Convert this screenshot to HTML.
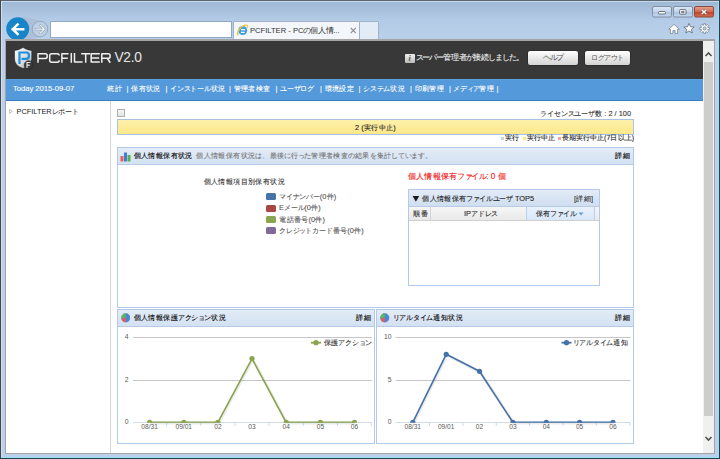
<!DOCTYPE html>
<html><head><meta charset="utf-8">
<style>
html,body{margin:0;padding:0;width:720px;height:459px;overflow:hidden;background:#b9d0ea;}
body{position:relative;font-family:"Liberation Sans",sans-serif;}
.a{position:absolute;}
.t{position:absolute;white-space:nowrap;line-height:1;-webkit-text-stroke-width:0.1px;}
#frame{left:0;top:0;width:720px;height:459px;background:linear-gradient(#9db6d3 0px,#b3cbe6 20px,#b9d1ea 40px,#b9d1ea 459px);}
#content{left:6px;top:41px;width:697px;height:412px;background:#fff;}
#hdr{left:6px;top:41px;width:697px;height:38px;background:#383838;}
#nav{left:6px;top:79px;width:697px;height:22px;background:#5499da;}
.t i{display:inline-block;width:1em;font-style:normal;text-align:center;}.t u{display:inline-block;width:0.92em;text-decoration:none;text-align:center;}.t b{display:inline-block;width:0.8em;font-weight:inherit;text-align:center;}
</style></head>
<body>
<div id="frame" class="a"></div>
<!-- window outer borders -->
<div class="a" style="left:0;top:0;width:720px;height:1px;background:#5c6670"></div>
<div class="a" style="left:0;top:0;width:1px;height:459px;background:#474747"></div>
<div class="a" style="left:1px;top:1px;width:718px;height:1px;background:#c9d9ec"></div>
<div class="a" style="left:1px;top:1px;width:1px;height:456px;background:#cfe0f2"></div>
<div class="a" style="left:718px;top:1px;width:1px;height:457px;background:#9fdcf6"></div>
<div class="a" style="left:719px;top:0;width:1px;height:459px;background:#1c4550"></div>
<div class="a" style="left:1px;top:457px;width:718px;height:1px;background:#9fdcf6"></div>
<div class="a" style="left:0;top:458px;width:720px;height:1px;background:#1c4550"></div>


<!-- chrome -->
<svg class="a" style="left:0;top:0" width="720" height="41" viewBox="0 0 720 41">
  <path d="M18 17.3 Q30 17.3 40 21 L40 37 Q28 40 18 40 Z" fill="#a9bbd1" opacity="0.75"/>
  <circle cx="40" cy="29" r="7.8" fill="#bccfe6" stroke="#8e9fb3" stroke-width="0.8"/>
  <path d="M35.8 29.2 H44.2 M40.6 25.4 L44.3 29.2 L40.6 33" fill="none" stroke="#8d9aab" stroke-width="2.2" stroke-linecap="round" stroke-linejoin="round"/><path d="M35.8 29.2 H44.2 M40.6 25.4 L44.3 29.2 L40.6 33" fill="none" stroke="#eef3f8" stroke-width="1.2" stroke-linecap="round" stroke-linejoin="round"/>
  <circle cx="17.7" cy="28.8" r="11.5" fill="#1785c8"/>
  <path d="M12.8 29.2 H23.2 M17.6 24.4 L12.8 29.2 L17.6 34" fill="none" stroke="#fff" stroke-width="2.5" stroke-linecap="square"/>
  <rect x="50.5" y="21.5" width="181" height="16" fill="#fff" stroke="#93a8c0" stroke-width="1"/>
  <path d="M233.5 39 V21.5 H359.5 V39" fill="#f3f6fa" stroke="#9fb2c8" stroke-width="1"/>
  <circle cx="242.7" cy="30.5" r="4.5" fill="#3c9ede"/>
  <path d="M241 29.6 H245.2 M240.9 32.4 H244.6" fill="none" stroke="#fff" stroke-width="1.1"/>
  <path d="M238.2 35.2 Q236.2 33.3 239.6 29 Q243.5 24.6 246.6 25.2 Q248 25.9 247.3 27.6" fill="none" stroke="#f3c52c" stroke-width="1.3"/>
  <path d="M350.8 28 L355.8 33 M355.8 28 L350.8 33" stroke="#8f949a" stroke-width="1.1"/>
  <path d="M359.5 39 V21.5 H378.5 V39" fill="#e2ecf7" stroke="#9fb2c8" stroke-width="1"/>
  <!-- window buttons -->
  <defs>
    <linearGradient id="wb" x1="0" y1="0" x2="0" y2="1"><stop offset="0" stop-color="#dde8f4"/><stop offset="0.5" stop-color="#c3d5ea"/><stop offset="0.55" stop-color="#aec5e0"/><stop offset="1" stop-color="#c6d9ee"/></linearGradient>
    <linearGradient id="wc" x1="0" y1="0" x2="0" y2="1"><stop offset="0" stop-color="#e8a493"/><stop offset="0.5" stop-color="#d2674f"/><stop offset="0.55" stop-color="#c2462c"/><stop offset="1" stop-color="#d56c4f"/></linearGradient>
  </defs>
  <rect x="652.5" y="6.5" width="19" height="10.5" rx="1.5" fill="url(#wb)" stroke="#7e8ea3" stroke-width="1"/>
  <rect x="673.5" y="6.5" width="19" height="10.5" rx="1.5" fill="url(#wb)" stroke="#7e8ea3" stroke-width="1"/>
  <rect x="694.5" y="6.5" width="19" height="10.5" rx="1.5" fill="url(#wc)" stroke="#8a4a3c" stroke-width="1"/>
  <rect x="658.5" y="11.5" width="7" height="2.5" rx="1" fill="#fff" stroke="#4a5563" stroke-width="0.8"/>
  <rect x="679.6" y="9.6" width="6.4" height="4.6" rx="0.8" fill="#f4f6f8" stroke="#4a5563" stroke-width="0.8"/>
  <rect x="681.2" y="11.2" width="3.2" height="1.6" fill="#5a6878"/>
  <path d="M701.6 9.6 L706.4 14.2 M706.4 9.6 L701.6 14.2" stroke="#5a2a20" stroke-width="2.6"/>
  <path d="M701.6 9.6 L706.4 14.2 M706.4 9.6 L701.6 14.2" stroke="#fff" stroke-width="1.5"/>
  <!-- home star gear -->
  <path d="M668.8 29.3 L674 24.3 L679.2 29.3 H677.6 V33.4 H675.1 V30.6 H672.9 V33.4 H670.4 V29.3 Z" fill="#fff" stroke="#6a7888" stroke-width="0.7" stroke-linejoin="round"/>
  <path d="M689 23.3 L690.5 26.8 L694.2 27 L691.3 29.4 L692.3 33 L689 31 L685.7 33 L686.7 29.4 L683.8 27 L687.5 26.8 Z" fill="#fff" stroke="#5d6b7a" stroke-width="0.8"/>
  <path d="M707.85 27.50 L709.43 27.67 L709.43 29.33 L707.85 29.50 L707.61 30.09 L708.60 31.33 L707.43 32.50 L706.19 31.51 L705.60 31.75 L705.43 33.33 L703.77 33.33 L703.60 31.75 L703.01 31.51 L701.77 32.50 L700.60 31.33 L701.59 30.09 L701.35 29.50 L699.77 29.33 L699.77 27.67 L701.35 27.50 L701.59 26.91 L700.60 25.67 L701.77 24.50 L703.01 25.49 L703.60 25.25 L703.77 23.67 L705.43 23.67 L705.60 25.25 L706.19 25.49 L707.43 24.50 L708.60 25.67 L707.61 26.91 Z" fill="#fff" stroke="#6a7888" stroke-width="0.7" stroke-linejoin="round"/>
  <circle cx="704.6" cy="28.5" r="1.6" fill="#b8cfe8" stroke="#6a7888" stroke-width="0.7"/>
</svg>
<div class="t" style="left:250px;top:26.5px;font-size:7.6px;color:#333;-webkit-text-stroke-width:0">PCFILTER - PC<u>の</u><i>個</i><i>人</i><i>情</i>...</div>

<!-- content border -->
<div class="a" style="left:5px;top:39px;width:710px;height:415px;background:#a4a4a4"></div>
<div id="content" class="a"></div>
<div id="hdr" class="a"></div>
<div id="nav" class="a"></div>


<!-- header -->
<svg class="a" style="left:12px;top:46px" width="24" height="26" viewBox="0 0 24 26">
  <defs><linearGradient id="sh" x1="0" y1="0" x2="1" y2="1"><stop offset="0" stop-color="#ffffff"/><stop offset="0.6" stop-color="#d9d9d9"/><stop offset="1" stop-color="#9a9a9a"/></linearGradient></defs>
  <path d="M11 1.5 Q15 4 19.8 4.5 V13 Q19.8 19.5 11 22.5 Q2.5 19.5 2.5 13 V4.5 Q7 4 11 1.5 Z" fill="url(#sh)" stroke="#222" stroke-width="0.6"/>
  <path d="M7.5 18 V6.5 H14 Q17 6.5 17 9.7 Q17 12.8 14 12.8 H9.5" fill="none" stroke="#1c8fe3" stroke-width="2.2"/>
  <circle cx="16.5" cy="19" r="4.3" fill="#3a3a3a" stroke="#222" stroke-width="0.5"/>
  <path d="M15 22 V16.5 H18.5 M15 19.2 H17.8" fill="none" stroke="#e8e8e8" stroke-width="1.2"/>
</svg>
<svg class="a" style="left:30px;top:48px" width="120" height="20" viewBox="30 48 120 20">
  <g fill="none" stroke="#f0f0f0" stroke-width="1.5" stroke-linejoin="round">
    <path d="M38 62.8 V53.7 H45.3 Q47.2 53.7 47.2 55.6 V56.6 Q47.2 58.5 45.3 58.5 H38"/>
    <path d="M59.2 55.6 Q59.2 53.7 57.3 53.7 H51.8 Q49.7 53.7 49.7 55.8 V60.2 Q49.7 62.2 51.8 62.2 H57.3 Q59.2 62.2 59.2 60.3"/>
    <path d="M61.9 62.8 V53.7 H68.6 M61.9 58.2 H67.8"/>
    <path d="M71.3 53 V62.8"/>
    <path d="M74.5 53 V62.1 H82.6"/>
    <path d="M81.2 53.7 H90.2 M85.7 53.7 V62.8"/>
    <path d="M99.8 53.7 H91.2 V62.1 H99.8 M91.2 58.1 H99.2"/>
    <path d="M101.8 62.8 V53.7 H108.2 Q110.1 53.7 110.1 55.6 V56.4 Q110.1 58.3 108.2 58.3 H101.8 M107.2 58.3 L110.3 62.8"/>
  </g>
</svg>
<div class="t" style="left:114.4px;top:51.2px;font-size:13.8px;color:#e6e6e6;letter-spacing:-0.3px;-webkit-text-stroke-width:0">V2.0</div>
<div class="a" style="left:405px;top:54px;width:10px;height:9px;background:linear-gradient(#f0f0f0,#bcbcbc);border-radius:1px"></div>
<div class="t" style="left:408.5px;top:55px;font-size:8px;font-style:italic;font-weight:bold;color:#555;font-family:'Liberation Serif',serif">i</div>
<div class="t" style="left:415.5px;top:54px;font-size:7.6px;color:#f0f0f0"><u>ス</u><u>ー</u><u>パ</u><u>ー</u><i>管</i><i>理</i><i>者</i><u>が</u><i>接</i><i>続</i><u>し</u><u>ま</u><u>し</u><u>た</u><i>。</i></div>
<div class="a" style="left:528px;top:51px;width:50px;height:14px;border-radius:2px;background:linear-gradient(#ffffff,#e9e9e9 50%,#d4d4d4);box-shadow:0 0 0 0.5px #222"></div>
<div class="t" style="left:528px;top:54px;width:50px;text-align:center;font-size:7.5px;color:#505050;-webkit-text-stroke-width:0"><u>ヘ</u><u>ル</u><u>プ</u></div>
<div class="a" style="left:585px;top:51px;width:45px;height:14px;border-radius:2px;background:linear-gradient(#ffffff,#e9e9e9 50%,#d4d4d4);box-shadow:0 0 0 0.5px #222"></div>
<div class="t" style="left:585px;top:54px;width:45px;text-align:center;font-size:7px;color:#505050;-webkit-text-stroke-width:0"><u>ロ</u><u>グ</u><u>ア</u><u>ウ</u><u>ト</u></div>

<!-- nav -->
<div class="a" style="left:6px;top:100px;width:697px;height:1px;background:#3c7cc0"></div>
<div class="a" style="left:6px;top:79px;width:697px;height:1px;background:#5a9fe0"></div>
<div class="t" style="left:13px;top:85px;font-size:7.6px;color:#fff">Today 2015-09-07</div>
<div class="t" style="left:107px;top:85px;font-size:7.4px;color:#fff"><i>統</i><i>計</i></div>
<div class="t" style="left:126.5px;top:85px;font-size:7.4px;color:#fff">|</div>
<div class="t" style="left:131px;top:85px;font-size:7.4px;color:#fff"><i>保</i><i>有</i><i>状</i><i>況</i></div>
<div class="t" style="left:165.5px;top:85px;font-size:7.4px;color:#fff">|</div>
<div class="t" style="left:170px;top:85px;font-size:7.4px;color:#fff"><u>イ</u><u>ン</u><u>ス</u><u>ト</u><u>ー</u><u>ル</u><i>状</i><i>況</i></div>
<div class="t" style="left:229px;top:85px;font-size:7.4px;color:#fff">|</div>
<div class="t" style="left:233.5px;top:85px;font-size:7.4px;color:#fff"><i>管</i><i>理</i><i>者</i><i>検</i><i>査</i></div>
<div class="t" style="left:275.5px;top:85px;font-size:7.4px;color:#fff">|</div>
<div class="t" style="left:280px;top:85px;font-size:7.4px;color:#fff"><u>ユ</u><u>ー</u><u>ザ</u><u>ロ</u><u>グ</u></div>
<div class="t" style="left:320px;top:85px;font-size:7.4px;color:#fff">|</div>
<div class="t" style="left:324.5px;top:85px;font-size:7.4px;color:#fff"><i>環</i><i>境</i><i>設</i><i>定</i></div>
<div class="t" style="left:358.5px;top:85px;font-size:7.4px;color:#fff">|</div>
<div class="t" style="left:363px;top:85px;font-size:7.4px;color:#fff"><u>シ</u><u>ス</u><u>テ</u><u>ム</u><i>状</i><i>況</i></div>
<div class="t" style="left:410px;top:85px;font-size:7.4px;color:#fff">|</div>
<div class="t" style="left:414.5px;top:85px;font-size:7.4px;color:#fff"><i>印</i><i>刷</i><i>管</i><i>理</i></div>
<div class="t" style="left:449px;top:85px;font-size:7.4px;color:#fff">|</div>
<div class="t" style="left:453px;top:85px;font-size:7.4px;color:#fff"><u>メ</u><u>デ</u><b>ィ</b><u>ア</u><i>管</i><i>理</i></div>
<div class="t" style="left:496.5px;top:85px;font-size:7.4px;color:#fff">|</div>

<!-- sidebar -->
<div class="a" style="left:110px;top:101px;width:1px;height:352px;background:#d4d4d4"></div>
<svg class="a" style="left:8px;top:108px" width="6" height="7"><path d="M1.6 1.4 L4.4 3.4 L1.6 5.4 Z" fill="none" stroke="#b0b0b0" stroke-width="0.8"/></svg>
<div class="t" style="left:16.5px;top:107.5px;font-size:7.4px;color:#222;-webkit-text-stroke-width:0">PCFILTER<u>レ</u><u>ポ</u><u>ー</u><u>ト</u></div>


<!-- main top -->
<div class="a" style="left:117px;top:109px;width:6px;height:6px;border:1px solid #b0b0b0;background:linear-gradient(#f4f4f4,#e4e4e4)"></div>
<div class="t" style="right:89px;top:109.5px;font-size:7.4px;color:#333"><u>ラ</u><u>イ</u><u>セ</u><u>ン</u><u>ス</u><u>ユ</u><u>ー</u><u>ザ</u><i>数</i> : 2 / 100</div>
<div class="a" style="left:117px;top:119px;width:515px;height:14px;border:1px solid #a9c1e2;background:linear-gradient(#fef1ab,#fdec9a 50%,#fce88b)"></div>
<div class="t" style="left:355px;top:123.5px;font-size:7.4px;color:#222">2 (<i>実</i><i>行</i><i>中</i><i>止</i>)</div>
<div class="a" style="left:501px;top:137px;width:3px;height:3px;background:#c2d6ee"></div>
<div class="t" style="left:504.5px;top:134.5px;font-size:7.1px;color:#222"><i>実</i><i>行</i></div>
<div class="a" style="left:523px;top:137px;width:3px;height:3px;background:#fbe98a"></div>
<div class="t" style="left:526.5px;top:134.5px;font-size:7.1px;color:#222"><i>実</i><i>行</i><i>中</i><i>止</i></div>
<div class="a" style="left:558px;top:137px;width:3px;height:3px;background:#f5a3a3"></div>
<div class="t" style="left:561.5px;top:134.5px;font-size:7.1px;color:#222"><i>長</i><i>期</i><i>実</i><i>行</i><i>中</i><i>止</i>(7<i>日</i><i>以</i><i>上</i>)</div>

<!-- panel 1 -->
<div class="a" style="left:117px;top:147px;width:515px;height:159px;border:1px solid #b2caea;background:#fff"></div>
<div class="a" style="left:118px;top:148px;width:515px;height:16px;background:linear-gradient(#e3ecf7,#d3e1f2);border-bottom:1px solid #b5cbe8;box-sizing:border-box;width:515px;height:17px"></div>
<svg class="a" style="left:120px;top:152px" width="11" height="10" viewBox="0 0 11 10">
  <rect x="0.5" y="4" width="3" height="5.5" fill="#e8605a"/>
  <rect x="4" y="0.5" width="3" height="9" fill="#3f7fd8"/>
  <rect x="7.5" y="3" width="3" height="6.5" fill="#5bb04a"/>
</svg>
<div class="t" style="left:133.5px;top:152px;font-size:7.4px;color:#111;-webkit-text-stroke-width:0.15px"><i>個</i><i>人</i><i>情</i><i>報</i><i>保</i><i>有</i><i>状</i><i>況</i></div>
<div class="t" style="left:196px;top:152px;font-size:7.4px;color:#777"><i>個</i><i>人</i><i>情</i><i>報</i><i>保</i><i>有</i><i>状</i><i>況</i><u>は</u><i>、</i><i>最</i><i>後</i><u>に</u><i>行</i><b>っ</b><u>た</u><i>管</i><i>理</i><i>者</i><i>検</i><i>査</i><u>の</u><i>結</i><i>果</i><u>を</u><i>集</i><i>計</i><u>し</u><u>て</u><u>い</u><u>ま</u><u>す</u><i>。</i></div>
<div class="t" style="right:90px;top:152px;font-size:7.4px;color:#1a1a1a;-webkit-text-stroke-width:0.2px"><i>詳</i><i>細</i></div>

<div class="t" style="left:203.5px;top:177.5px;font-size:7.4px;color:#333"><i>個</i><i>人</i><i>情</i><i>報</i><i>項</i><i>目</i><i>別</i><i>保</i><i>有</i><i>状</i><i>況</i></div>
<div class="a" style="left:266px;top:193px;width:10px;height:7px;border-radius:1.5px;background:#4572a7"></div>
<div class="a" style="left:266px;top:204.5px;width:10px;height:7px;border-radius:1.5px;background:#aa4643"></div>
<div class="a" style="left:266px;top:216px;width:10px;height:7px;border-radius:1.5px;background:#89a54e"></div>
<div class="a" style="left:266px;top:227px;width:10px;height:7px;border-radius:1.5px;background:#80699b"></div>
<div class="t" style="left:279px;top:192.5px;font-size:7.4px;color:#555"><u>マ</u><u>イ</u><u>ナ</u><u>ン</u><u>バ</u><u>ー</u>(0<i>件</i>)</div>
<div class="t" style="left:279px;top:204px;font-size:7.4px;color:#555">E<u>メ</u><u>ー</u><u>ル</u>(0<i>件</i>)</div>
<div class="t" style="left:279px;top:215.5px;font-size:7.4px;color:#555"><i>電</i><i>話</i><i>番</i><i>号</i>(0<i>件</i>)</div>
<div class="t" style="left:279px;top:226.5px;font-size:7.4px;color:#555"><u>ク</u><u>レ</u><u>ジ</u><b>ッ</b><u>ト</u><u>カ</u><u>ー</u><u>ド</u><i>番</i><i>号</i>(0<i>件</i>)</div>

<div class="t" style="left:408px;top:172.6px;font-size:8.2px;color:#f01010"><i>個</i><i>人</i><i>情</i><i>報</i><i>保</i><i>有</i><u>フ</u><b>ァ</b><u>イ</u><u>ル</u>: 0 <i>個</i></div>

<div class="a" style="left:408px;top:189px;width:190px;height:95px;border:1px solid #b2caea;background:#fff"></div>
<div class="a" style="left:409px;top:190px;width:190px;height:16px;background:linear-gradient(#e3ecf7,#d0def0);border-bottom:1px solid #b7cbe6;box-sizing:border-box;height:17px"></div>
<svg class="a" style="left:412px;top:195px" width="8" height="8"><path d="M0.6 1 H7.2 L3.9 6.8 Z" fill="#1a1a1a"/></svg>
<div class="t" style="left:422px;top:195px;font-size:7.4px;color:#222"><i>個</i><i>人</i><i>情</i><i>報</i><i>保</i><i>有</i><u>フ</u><b>ァ</b><u>イ</u><u>ル</u><u>ユ</u><u>ー</u><u>ザ</u> TOP5</div>
<div class="t" style="right:127px;top:195px;font-size:7.4px;color:#333">[<i>詳</i><i>細</i>]</div>
<div class="a" style="left:409px;top:207px;width:190px;height:14px;background:linear-gradient(#f6f6f6,#e9e9e9);border-bottom:1px solid #d0d0d0;box-sizing:border-box;height:14px"></div>
<div class="a" style="left:430px;top:207px;width:1px;height:13px;background:#d6d6d6"></div>
<div class="a" style="left:526px;top:207px;width:69px;height:13px;background:linear-gradient(#e9f2fc,#d8e7f8);border-left:1px solid #b8d0ec;border-right:1px solid #b8d0ec;box-sizing:border-box"></div>
<div class="t" style="left:413px;top:210px;font-size:7.4px;color:#222"><i>順</i><i>番</i></div>
<div class="t" style="left:464px;top:210px;font-size:7.4px;color:#222">IP<u>ア</u><u>ド</u><u>レ</u><u>ス</u></div>
<div class="t" style="left:535.5px;top:210px;font-size:7.4px;color:#222"><i>保</i><i>有</i><u>フ</u><b>ァ</b><u>イ</u><u>ル</u></div>
<svg class="a" style="left:578px;top:212px" width="6" height="4"><path d="M0.5 0.5 H5.5 L3 3.5 Z" fill="#6a9ad6"/></svg>

<!-- panel 2 -->
<div class="a" style="left:117px;top:309px;width:256px;height:133px;border:1px solid #b2caea;background:#fff"></div>
<div class="a" style="left:118px;top:310px;width:256px;height:17px;background:linear-gradient(#e3ecf7,#d3e1f2);border-bottom:1px solid #b5cbe8;box-sizing:border-box;height:17px"></div>
<svg class="a" style="left:120.6px;top:313.1px" width="9.6" height="9.6" viewBox="0.4 0.4 11.2 11.2">
  <circle cx="6" cy="6" r="5.2" fill="#4a86d8"/>
  <path d="M6 6 L6 0.8 A5.2 5.2 0 0 0 0.85 6.9 Z" fill="#5cb85c"/>
  <path d="M6 6 L0.85 6.9 A5.2 5.2 0 0 0 6 11.2 Z" fill="#e85a5a"/>
  <circle cx="6" cy="6" r="5.2" fill="none" stroke="#8aa0b8" stroke-width="0.5" opacity="0.6"/>
</svg>
<div class="t" style="left:133.5px;top:314px;font-size:7.4px;color:#000;-webkit-text-stroke:0.1px #000"><i>個</i><i>人</i><i>情</i><i>報</i><i>保</i><i>護</i><u>ア</u><u>ク</u><u>シ</u><b>ョ</b><u>ン</u><i>状</i><i>況</i></div>
<div class="t" style="right:349px;top:314px;font-size:7.4px;color:#1a1a1a;-webkit-text-stroke-width:0.2px"><i>詳</i><i>細</i></div>

<!-- panel 3 -->
<div class="a" style="left:376px;top:309px;width:256px;height:133px;border:1px solid #b2caea;background:#fff"></div>
<div class="a" style="left:377px;top:310px;width:256px;height:17px;background:linear-gradient(#e3ecf7,#d3e1f2);border-bottom:1px solid #b5cbe8;box-sizing:border-box;height:17px"></div>
<svg class="a" style="left:380px;top:313.1px" width="9.6" height="9.6" viewBox="0.4 0.4 11.2 11.2">
  <circle cx="6" cy="6" r="5.2" fill="#4a86d8"/>
  <path d="M6 6 L6 0.8 A5.2 5.2 0 0 0 0.85 6.9 Z" fill="#5cb85c"/>
  <path d="M6 6 L0.85 6.9 A5.2 5.2 0 0 0 6 11.2 Z" fill="#e85a5a"/>
  <circle cx="6" cy="6" r="5.2" fill="none" stroke="#8aa0b8" stroke-width="0.5" opacity="0.6"/>
</svg>
<div class="t" style="left:392.5px;top:314px;font-size:7.4px;color:#000;-webkit-text-stroke:0.1px #000"><u>リ</u><u>ア</u><u>ル</u><u>タ</u><u>イ</u><u>ム</u><i>通</i><i>知</i><i>状</i><i>況</i></div>
<div class="t" style="right:90px;top:314px;font-size:7.4px;color:#1a1a1a;-webkit-text-stroke-width:0.2px"><i>詳</i><i>細</i></div>


<!-- charts -->
<svg class="a" style="left:0;top:0" width="720" height="459" viewBox="0 0 720 459" font-family="Liberation Sans, sans-serif">
<defs><clipPath id="clip1"><rect x="133" y="330" width="238.8" height="92.8"/></clipPath></defs>
<path d="M133 337.5 H371.8" stroke="#c6c6c6" stroke-width="1"/>
<text x="128.5" y="338.8" text-anchor="end" font-size="6.8" fill="#5a5a5a">4</text>
<path d="M133 380.5 H371.8" stroke="#c6c6c6" stroke-width="1"/>
<text x="128.5" y="381.8" text-anchor="end" font-size="6.8" fill="#5a5a5a">2</text>
<text x="128.5" y="423.8" text-anchor="end" font-size="6.8" fill="#5a5a5a">0</text>
<path d="M133 422.5 H371.8" stroke="#d0dcea" stroke-width="1"/>
<path d="M166.7 422.5 V426" stroke="#d0dcea" stroke-width="1"/>
<path d="M200.8 422.5 V426" stroke="#d0dcea" stroke-width="1"/>
<path d="M235.0 422.5 V426" stroke="#d0dcea" stroke-width="1"/>
<path d="M269.1 422.5 V426" stroke="#d0dcea" stroke-width="1"/>
<path d="M303.3 422.5 V426" stroke="#d0dcea" stroke-width="1"/>
<path d="M337.4 422.5 V426" stroke="#d0dcea" stroke-width="1"/>
<path d="M371.3 422.5 V426" stroke="#d0dcea" stroke-width="1"/>
<text x="149.6" y="428.7" text-anchor="middle" font-size="6.6" fill="#5a5a5a">08/31</text>
<text x="183.8" y="428.7" text-anchor="middle" font-size="6.6" fill="#5a5a5a">09/01</text>
<text x="217.9" y="428.7" text-anchor="middle" font-size="6.6" fill="#5a5a5a">02</text>
<text x="252.0" y="428.7" text-anchor="middle" font-size="6.6" fill="#5a5a5a">03</text>
<text x="286.2" y="428.7" text-anchor="middle" font-size="6.6" fill="#5a5a5a">04</text>
<text x="320.4" y="428.7" text-anchor="middle" font-size="6.6" fill="#5a5a5a">05</text>
<text x="354.5" y="428.7" text-anchor="middle" font-size="6.6" fill="#5a5a5a">06</text>
<path d="M149.6 422.3 L183.8 422.3 L217.9 422.3 L252.0 358.6 L286.2 422.3 L320.4 422.3 L354.5 422.3" fill="none" stroke="#000" stroke-opacity="0.08" stroke-width="3" transform="translate(0.8 0.8)" stroke-linejoin="round"/>
<g clip-path="url(#clip1)"><path d="M149.6 422.3 L183.8 422.3 L217.9 422.3 L252.0 358.6 L286.2 422.3 L320.4 422.3 L354.5 422.3" fill="none" stroke="#89a54e" stroke-width="1.6" stroke-linejoin="round"/>
<circle cx="149.6" cy="422.3" r="2.6" fill="#89a54e"/>
<circle cx="183.8" cy="422.3" r="2.6" fill="#89a54e"/>
<circle cx="217.9" cy="422.3" r="2.6" fill="#89a54e"/>
<circle cx="252.0" cy="358.6" r="2.6" fill="#89a54e"/>
<circle cx="286.2" cy="422.3" r="2.6" fill="#89a54e"/>
<circle cx="320.4" cy="422.3" r="2.6" fill="#89a54e"/>
<circle cx="354.5" cy="422.3" r="2.6" fill="#89a54e"/>
</g>
<path d="M311 342.7 H321" stroke="#89a54e" stroke-width="1.8"/><circle cx="316" cy="342.7" r="2.6" fill="#89a54e"/>
<defs><clipPath id="clip2"><rect x="395.5" y="330" width="235.0" height="92.8"/></clipPath></defs>
<path d="M395.5 337.5 H630.5" stroke="#c6c6c6" stroke-width="1"/>
<text x="391.5" y="338.8" text-anchor="end" font-size="6.8" fill="#5a5a5a">10</text>
<path d="M395.5 380.5 H630.5" stroke="#c6c6c6" stroke-width="1"/>
<text x="391.5" y="381.8" text-anchor="end" font-size="6.8" fill="#5a5a5a">5</text>
<text x="391.5" y="423.8" text-anchor="end" font-size="6.8" fill="#5a5a5a">0</text>
<path d="M395.5 422.5 H630.5" stroke="#d0dcea" stroke-width="1"/>
<path d="M429.5 422.5 V426" stroke="#d0dcea" stroke-width="1"/>
<path d="M462.9 422.5 V426" stroke="#d0dcea" stroke-width="1"/>
<path d="M496.2 422.5 V426" stroke="#d0dcea" stroke-width="1"/>
<path d="M529.6 422.5 V426" stroke="#d0dcea" stroke-width="1"/>
<path d="M563.0 422.5 V426" stroke="#d0dcea" stroke-width="1"/>
<path d="M596.3 422.5 V426" stroke="#d0dcea" stroke-width="1"/>
<path d="M630.0 422.5 V426" stroke="#d0dcea" stroke-width="1"/>
<text x="412.8" y="428.7" text-anchor="middle" font-size="6.6" fill="#5a5a5a">08/31</text>
<text x="446.2" y="428.7" text-anchor="middle" font-size="6.6" fill="#5a5a5a">09/01</text>
<text x="479.5" y="428.7" text-anchor="middle" font-size="6.6" fill="#5a5a5a">02</text>
<text x="512.9" y="428.7" text-anchor="middle" font-size="6.6" fill="#5a5a5a">03</text>
<text x="546.3" y="428.7" text-anchor="middle" font-size="6.6" fill="#5a5a5a">04</text>
<text x="579.6" y="428.7" text-anchor="middle" font-size="6.6" fill="#5a5a5a">05</text>
<text x="613.0" y="428.7" text-anchor="middle" font-size="6.6" fill="#5a5a5a">06</text>
<path d="M412.8 422.3 L446.2 354.3 L479.5 371.3 L512.9 422.3 L546.3 422.3 L579.6 422.3 L613.0 422.3" fill="none" stroke="#000" stroke-opacity="0.08" stroke-width="3" transform="translate(0.8 0.8)" stroke-linejoin="round"/>
<g clip-path="url(#clip2)"><path d="M412.8 422.3 L446.2 354.3 L479.5 371.3 L512.9 422.3 L546.3 422.3 L579.6 422.3 L613.0 422.3" fill="none" stroke="#4572a7" stroke-width="1.6" stroke-linejoin="round"/>
<circle cx="412.8" cy="422.3" r="2.6" fill="#4572a7"/>
<circle cx="446.2" cy="354.3" r="2.6" fill="#4572a7"/>
<circle cx="479.5" cy="371.3" r="2.6" fill="#4572a7"/>
<circle cx="512.9" cy="422.3" r="2.6" fill="#4572a7"/>
<circle cx="546.3" cy="422.3" r="2.6" fill="#4572a7"/>
<circle cx="579.6" cy="422.3" r="2.6" fill="#4572a7"/>
<circle cx="613.0" cy="422.3" r="2.6" fill="#4572a7"/>
</g>
<path d="M561.5 342.7 H571.5" stroke="#4572a7" stroke-width="1.8"/><circle cx="566.5" cy="342.7" r="2.6" fill="#4572a7"/>
</svg>
<div class="t" style="left:323.5px;top:338.5px;font-size:7.4px;color:#333"><i>保</i><i>護</i><u>ア</u><u>ク</u><u>シ</u><b>ョ</b><u>ン</u></div>
<div class="t" style="left:572.5px;top:338.5px;font-size:7.4px;color:#333"><u>リ</u><u>ア</u><u>ル</u><u>タ</u><u>イ</u><u>ム</u><i>通</i><i>知</i></div>
<!-- /charts -->

<!-- scrollbar -->
<div class="a" style="left:703px;top:41px;width:11px;height:412px;background:#f0f0f0"></div>
<div class="a" style="left:704px;top:62px;width:9px;height:354px;background:#cdcdcd"></div>
<svg class="a" style="left:703px;top:41px" width="11" height="412" viewBox="0 0 11 412">
  <path d="M2.5 15 L5.5 12 L8.5 15" fill="none" stroke="#505050" stroke-width="1.6"/>
  <path d="M2.5 396 L5.5 399 L8.5 396" fill="none" stroke="#505050" stroke-width="1.6"/>
</svg>

</body></html>
